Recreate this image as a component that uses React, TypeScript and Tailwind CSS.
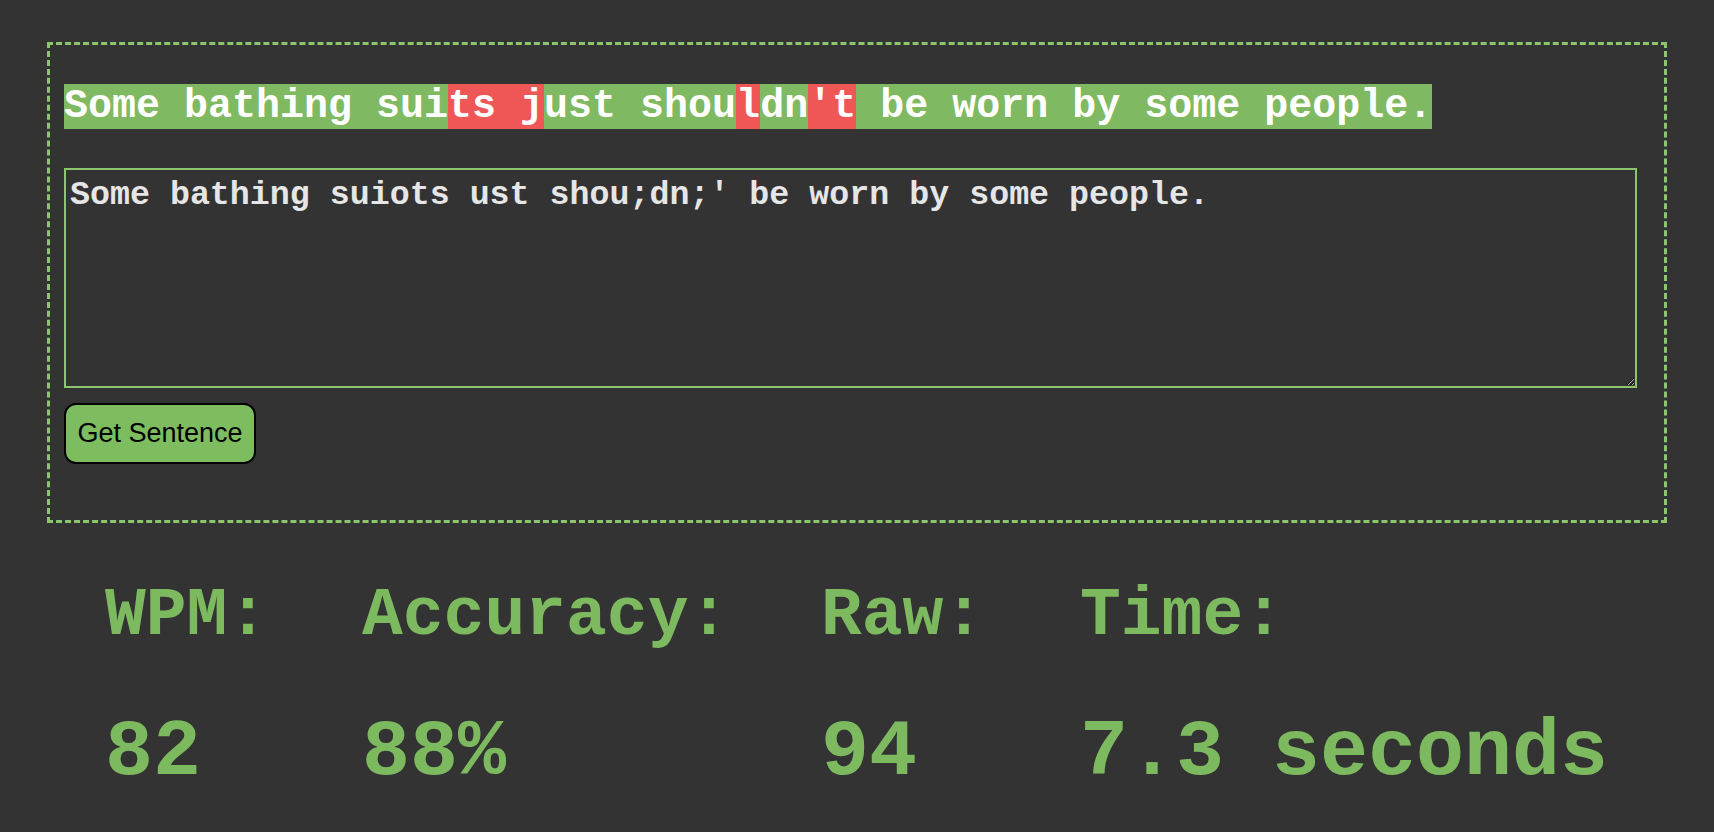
const sentence = "Some bathing suits just shouldn't be worn by some people.";
const typed = "Some bathing suiots ust shou;dn;' be worn by some people.";

const stats = [
  { label: "WPM:", value: "82" },
  { label: "Accuracy:", value: "88%" },
  { label: "Raw:", value: "94" },
  { label: "Time:", value: "7.3 seconds" },
];

export default function App() {
  // group consecutive chars by correct / wrong so the spans stay few
  const chunks: { text: string; ok: boolean }[] = [];
  sentence.split("").forEach((ch, i) => {
    const ok = typed[i] === ch;
    const last = chunks[chunks.length - 1];
    if (last && last.ok === ok) last.text += ch;
    else chunks.push({ text: ch, ok });
  });

  return (
    <div className="min-h-screen bg-[#333333] px-[47px] pt-[42px] font-['Liberation_Mono','Courier_New',monospace]">
      {/* Typing box */}
      <div className="border-[3px] border-dashed border-[#8cc56c] pl-[14px] pt-[32px] pb-[56px]">
        <div className="text-[40px] font-bold text-white whitespace-pre">
          {chunks.map((c, i) => (
            <span key={i} className={c.ok ? "bg-[#7fb961]" : "bg-[#ef5757]"}>
              {c.text}
            </span>
          ))}
        </div>
        <textarea
          className="mt-[31px] block w-[1573px] h-[220px] border-2 border-[#8cc56c] bg-[#333333] px-[4px] py-[1px] text-[33.3px] font-bold text-[#e6e6e6] outline-none font-['Liberation_Mono','Courier_New',monospace]"
          defaultValue={typed}
        />
        <button className="mt-[15px] block w-[192px] h-[61px] rounded-[12px] border-2 border-black bg-[#7dbd60] text-[27px] text-black font-['Liberation_Sans',Arial,sans-serif]">
          Get Sentence
        </button>
      </div>

      {/* Stats */}
      <div className="ml-[58px] mt-[54px] grid grid-cols-[257px_459px_259px_auto] font-bold text-[#7dba5f]">
        {stats.map((s) => (
          <div key={s.label} className="flex flex-col">
            <div className="text-[68px] leading-[77px] whitespace-pre">{s.label}</div>
            <div className="mt-[54px] text-[80px] leading-[90px] whitespace-pre">{s.value}</div>
          </div>
        ))}
      </div>
    </div>
  );
}
